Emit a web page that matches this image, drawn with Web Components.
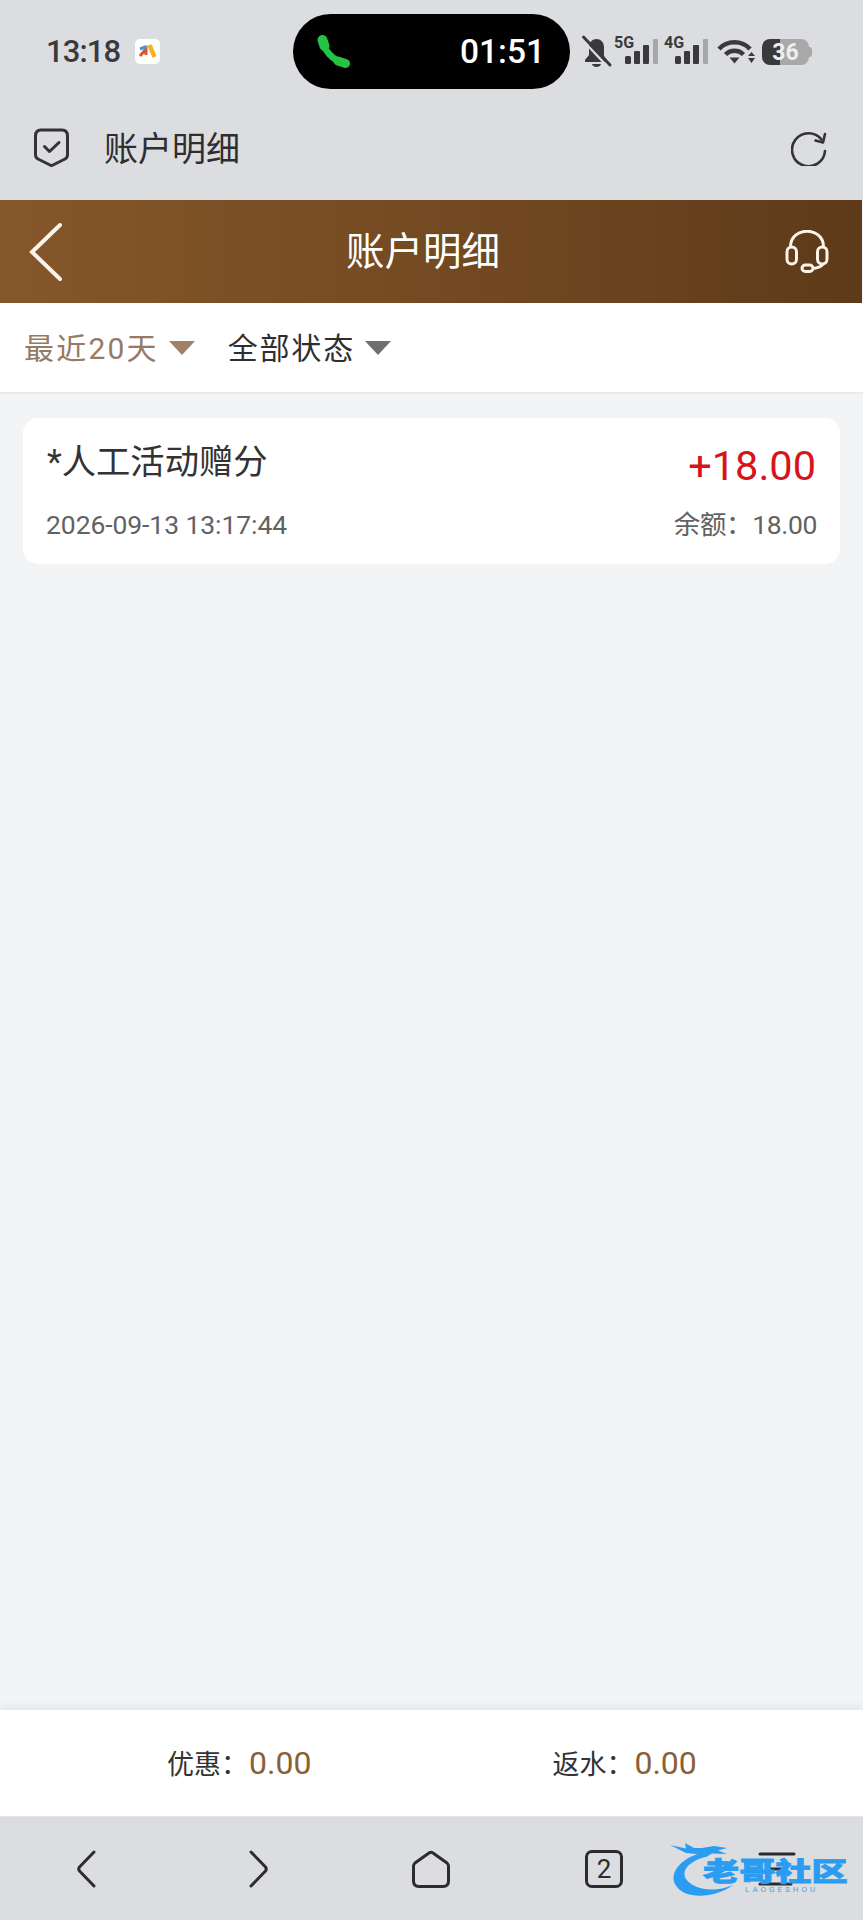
<!DOCTYPE html>
<html lang="zh">
<head>
<meta charset="utf-8">
<title>账户明细</title>
<style>
  html, body { margin: 0; padding: 0; background: #f3f4f6; }
  body { font-family: Roboto, "Noto Sans CJK SC", sans-serif; }
  #app { display: flex; flex-direction: column; height: 1920px; }
  #app > .grow { flex: 1; }
</style>
</head>
<body>
<div id="app">
  <status-bar time="13:18" call="01:51"></status-bar>
  <browser-bar>账户明细</browser-bar>
  <page-header>账户明细</page-header>
  <filter-bar>
    <filter-option active>最近20天</filter-option>
    <filter-option>全部状态</filter-option>
  </filter-bar>
  <div class="grow">
    <ledger-card name="*人工活动赠分" date="2026-09-13 13:17:44" amount="+18.00" balance="18.00"></ledger-card>
  </div>
  <summary-bar discount="0.00" rebate="0.00"></summary-bar>
  <nav-bar tabs="2"></nav-bar>
</div>

<script>
const FONT = 'Roboto, "Noto Sans CJK SC", sans-serif';

class SignalIcon extends HTMLElement {
  constructor() {
    super();
    this.attachShadow({ mode: "open" }).innerHTML = `
      <style>
        :host { display: block; position: relative; flex: none; width: 46px; height: 30px; }
        span { position: absolute; left: 0; top: -3px; font: 700 16px/18px ${FONT}; color: #3a3a3c; }
        svg { position: absolute; left: 0; top: 0; }
      </style>
      <span>${this.getAttribute("label")}</span>
      <svg width="46" height="30" viewBox="0 0 46 30" fill="#3a3a3c">
        <rect x="11" y="19" width="6" height="8" rx="1.5"/>
        <rect x="20" y="14" width="6" height="13" rx="1"/>
        <rect x="29" y="8" width="6" height="19" rx="1"/>
        <rect x="39" y="2" width="5" height="25" rx="1" fill="#a6a7a8"/>
      </svg>`;
  }
}
customElements.define("signal-icon", SignalIcon);

class StatusBar extends HTMLElement {
  constructor() {
    super();
    this.attachShadow({ mode: "open" }).innerHTML = `
      <style>
        :host { display: flex; align-items: center; height: 75px; padding: 14px 0 26px 46px; background: #dcdde0; font-family: ${FONT}; }
        .time { font-size: 31px; font-weight: 500; letter-spacing: -.9px; color: #3a3a3c; width: 89px; }
        .app { width: 25px; height: 25px; border-radius: 5px; background: #fff; margin-right: 133px; flex: none; }
        .pill { width: 277px; height: 75px; border-radius: 38px; background: #000; display: flex; align-items: center; box-sizing: border-box; padding: 0 25px 0 24px; flex: none; }
        .pill span { margin-left: auto; color: #fff; font-size: 33.5px; font-weight: 500; }
        .icons { display: flex; align-items: center; margin-left: 12px; }
        .bell { margin-right: 3px; flex: none; }
        signal-icon + signal-icon { margin-left: 4px; }
        .wifi { margin: 0 8px 0 7px; flex: none; }
        .battery { position: relative; width: 50px; height: 26px; flex: none; margin-left: -1px; }
        .cell { width: 47px; height: 26px; border-radius: 8px; background: linear-gradient(90deg, #3a3a3c 0 18px, #a8a8a8 18px); text-align: center; color: #eee; font: 700 23px/27px ${FONT}; }
        .nub { position: absolute; right: 0; top: 8px; width: 3px; height: 10px; border-radius: 0 3px 3px 0; background: #a8a8a8; }
      </style>
      <span class="time">${this.getAttribute("time")}</span>
      <svg class="app" viewBox="0 0 25 25">
        <path d="M14.5 6 L19.5 18" stroke="#f5b21c" stroke-width="4.5" fill="none"/>
        <path d="M5 17 L11 10 L11 16" stroke="#d9582a" stroke-width="3" fill="none"/>
        <path d="M5 10 L11.5 7.5" stroke="#3f9bd6" stroke-width="3" fill="none"/>
      </svg>
      <div class="pill">
        <svg width="34" height="34" viewBox="0 0 34 34" fill="none" stroke="#25c244" stroke-linecap="round">
          <path d="M6 6 C7 15 15 25 27 28" stroke-width="6.500"/>
          <path d="M5.500 5 L7.500 11" stroke-width="10"/>
          <path d="M21 26 L28.500 28.500" stroke-width="9"/>
        </svg>
        <span>${this.getAttribute("call")}</span>
      </div>
      <div class="icons">
        <svg class="bell" width="29" height="32" viewBox="0 0 29 32" style="overflow:visible">
          <path d="M3 26 H25 V24 L22 20 V11 C22 6 18.500 3 14.500 3 C10.500 3 7 6 7 11 V19 L3 24 Z" fill="#3a3a3c"/>
          <path d="M10 28 H19 C18.500 32 10.500 32 10 28 Z" fill="#3a3a3c"/>
          <path d="M0 3.500 L25 30" stroke="#dcdde0" stroke-width="2.500"/>
          <path d="M1.500 1 L28 29" stroke="#3a3a3c" stroke-width="3" stroke-linecap="round"/>
        </svg>
        <signal-icon label="5G"></signal-icon>
        <signal-icon label="4G"></signal-icon>
        <svg class="wifi" width="38" height="26" viewBox="0 0 38 26" fill="none" stroke="#3a3a3c" stroke-width="4.500">
          <path d="M2 10 C10 1 25 1 33 10"/>
          <path d="M8.500 15.500 C13.500 10.500 21.500 10.500 26.500 15.500"/>
          <path d="M12.500 18.500 H22.500 L17.500 24.500 Z" fill="#3a3a3c" stroke="none"/>
          <path d="M31 17 H38 L34.500 13 Z M31 19 H38 L34.500 24 Z" fill="#3a3a3c" stroke="none"/>
        </svg>
        <div class="battery"><div class="cell">36</div><div class="nub"></div></div>
      </div>`;
  }
}
customElements.define("status-bar", StatusBar);

class BrowserBar extends HTMLElement {
  constructor() {
    super();
    this.attachShadow({ mode: "open" }).innerHTML = `
      <style>
        :host { display: flex; align-items: center; height: 66px; padding: 0 36px 19px 34px; background: #dcdde0; color: #2e2e30; font: 34px ${FONT}; }
        .title { margin-left: 35px; padding-bottom: 4px; flex: 1; }
      </style>
      <svg width="35" height="40" viewBox="0 0 35 40" fill="none" stroke="#333" stroke-width="3" stroke-linejoin="round" stroke-linecap="round">
        <path d="M1.500 8 Q1.500 2 7 2 H28 Q33.500 2 33.500 8 V27 Q33.500 29.500 31 31 L19 37 Q17.500 37.800 16 37 L4 31 Q1.500 29.500 1.500 27 Z"/>
        <path d="M10.500 18.500 L15.500 23.500 L25 14.500"/>
      </svg>
      <span class="title"><slot></slot></span>
      <svg width="36" height="36" viewBox="0 0 36 36" fill="none" stroke="#333" stroke-width="2.6" stroke-linecap="round" stroke-linejoin="round">
        <path d="M34 21 A16.500 16.500 0 1 1 30.500 9.500"/>
        <path d="M34 4 L32 12.500 L24.500 10.500"/>
      </svg>`;
  }
}
customElements.define("browser-bar", BrowserBar);

class PageHeader extends HTMLElement {
  constructor() {
    super();
    this.attachShadow({ mode: "open" }).innerHTML = `
      <style>
        :host { display: flex; align-items: center; height: 103px; padding-left: 29px; margin-right: 1px; background: linear-gradient(90deg, #85572a 0%, #744a22 50%, #5e3a1a 100%); color: #fff; font: 38.500px ${FONT}; }
        .title { margin-left: 284px; padding-bottom: 7px; flex: 1; }
        .help { margin-right: 33px; }
      </style>
      <svg width="33" height="60" viewBox="0 0 33 60" fill="none" stroke="#fbf4ea" stroke-width="4" stroke-linecap="round">
        <path d="M31 3 L3 30 L31 57"/>
      </svg>
      <span class="title"><slot></slot></span>
      <svg class="help" width="44" height="44" viewBox="0 0 44 44" fill="none" stroke="#fbf4ea" stroke-width="3">
        <path d="M5.500 17 C5.500 -4 38.500 -4 38.500 17"/>
        <rect x="2" y="17" width="9.500" height="17" rx="4.700"/>
        <rect x="32.500" y="17" width="9.500" height="17" rx="4.700"/>
        <path d="M38 34 C36 37 33 38 28 38.500"/>
        <rect x="17" y="35" width="11" height="6.500" rx="3.200"/>
      </svg>`;
  }
}
customElements.define("page-header", PageHeader);

class FilterOption extends HTMLElement {
  constructor() {
    super();
    this.attachShadow({ mode: "open" }).innerHTML = `
      <style>
        :host { display: flex; align-items: center; gap: 10px; color: #2e2e30; --arrow: #6f6f6f; font: 30px ${FONT}; letter-spacing: 1.800px; }
        :host([active]) { color: #957a66; --arrow: #a08168; letter-spacing: 2.200px; }
        i { width: 0; height: 0; border: 13.500px solid transparent; border-bottom: 0; border-top: 14px solid var(--arrow); margin-top: 4px; }
      </style>
      <slot></slot><i></i>`;
  }
}
customElements.define("filter-option", FilterOption);

class FilterBar extends HTMLElement {
  constructor() {
    super();
    this.attachShadow({ mode: "open" }).innerHTML = `
      <style>
        :host { display: flex; align-items: center; gap: 33px; box-sizing: border-box; height: 91px; padding: 0 0 4px 24px; background: #fff; border-bottom: 2px solid #e9eaec; }
      </style>
      <slot></slot>`;
  }
}
customElements.define("filter-bar", FilterBar);

class LedgerCard extends HTMLElement {
  constructor() {
    super();
    this.attachShadow({ mode: "open" }).innerHTML = `
      <style>
        :host { display: grid; grid-template-columns: 1fr auto; align-content: space-between; height: 146px; box-sizing: border-box; margin: 24px 23px 0; padding: 20px 23px 21px 24px; border-radius: 15px; background: #fff; font-family: ${FONT}; }
        .name { font-size: 34.300px; line-height: 48px; color: #333; }
        .amount { font-size: 41.500px; line-height: 52px; margin: 2px 1px 0 0; color: #d7141a; text-align: right; }
        .date, .balance { font-size: 26.500px; line-height: 36px; color: #626262; }
        .date { margin-left: -1px; letter-spacing: -.08px; }
        .balance { text-align: right; letter-spacing: -.35px; }
      </style>
      <span class="name">${this.getAttribute("name")}</span>
      <span class="amount">${this.getAttribute("amount")}</span>
      <span class="date">${this.getAttribute("date")}</span>
      <span class="balance">余额：${this.getAttribute("balance")}</span>`;
  }
}
customElements.define("ledger-card", LedgerCard);

class SummaryBar extends HTMLElement {
  constructor() {
    super();
    this.attachShadow({ mode: "open" }).innerHTML = `
      <style>
        :host { display: flex; align-items: center; gap: 241px; height: 107px; box-sizing: border-box; padding: 0 0 1px 167px; background: #fff; box-shadow: 0 -3px 8px rgba(0,0,0,.07); border-bottom: 1px solid #e4e5e7; color: #333; font: 27px ${FONT}; position: relative; }
        b { font-weight: 400; font-size: 32px; color: #8a5f36; margin-left: 1px; }
        div { display: flex; align-items: center; white-space: nowrap; }
      </style>
      <div>优惠：<b>${this.getAttribute("discount")}</b></div>
      <div>返水：<b>${this.getAttribute("rebate")}</b></div>`;
  }
}
customElements.define("summary-bar", SummaryBar);

class WatermarkLogo extends HTMLElement {
  constructor() {
    super();
    this.attachShadow({ mode: "open" }).innerHTML = `
      <style>
        :host { display: block; position: absolute; left: 670px; top: 1840px; width: 185px; height: 60px; font-family: ${FONT}; pointer-events: none; }
        svg { position: absolute; left: 0; top: 0; }
        .cn { position: absolute; left: 33px; top: 17px; font-size: 26px; line-height: 30px; font-weight: 900; color: #2a9df2; white-space: nowrap; transform: scaleX(1.39); transform-origin: 0 0; -webkit-text-stroke: .8px #2a9df2; }
        .en { position: absolute; left: 75px; top: 45px; font-size: 8px; line-height: 9px; letter-spacing: 3px; color: #4f9fdc; white-space: nowrap; }
      </style>
      <svg width="70" height="60" viewBox="0 0 70 60" fill="#2a9df2">
        <path d="M34 13 C12 16 -1 33 5 44 C13 60 44 59 63 45 C44 53 24 50 16 39 C10 29 22 20 38 16 Z"/>
        <path d="M0 5 L16 8.500 L15 3 L24 8 L32 8 L44 6 L57 8 L48 10.500 L57 14 L42 13.500 L36 17 L26 14 L16 13 Z"/>
      </svg>
      <span class="cn">老哥社区</span>
      <span class="en">LAOGESHOU</span>`;
  }
}
customElements.define("watermark-logo", WatermarkLogo);

class NavBar extends HTMLElement {
  constructor() {
    super();
    this.attachShadow({ mode: "open" }).innerHTML = `
      <style>
        :host { display: flex; height: 103px; background: #dcdde0; color: #2c2c2e; }
        div { flex: 1; display: flex; align-items: center; justify-content: center; }
        svg { display: block; fill: none; stroke: #2c2c2e; stroke-width: 3; stroke-linecap: round; stroke-linejoin: round; }
        .tabs { box-sizing: border-box; width: 38px; height: 38px; flex: none; border: 3px solid #2c2c2e; border-radius: 7px; font: 26px/32px ${FONT}; text-align: center; display: block; }
      </style>
      <div><svg width="20" height="38" viewBox="0 0 20 38"><path d="M18 2 L3.500 17 Q2 19 3.500 21 L18 36"/></svg></div>
      <div><svg width="20" height="38" viewBox="0 0 20 38"><path d="M2 2 L16.500 17 Q18 19 16.500 21 L2 36"/></svg></div>
      <div><svg width="38" height="38" viewBox="0 0 38 38"><path d="M17 3 Q19 1.500 21 3 L35 13 Q36.500 14.500 36.500 16 V31 Q36.500 36.500 31 36.500 H7 Q1.500 36.500 1.500 31 V16 Q1.500 14.500 3 13 Z"/></svg></div>
      <div><span class="tabs">${this.getAttribute("tabs")}</span></div>
      <div><svg width="38" height="34" viewBox="0 0 38 34"><path d="M2 2 H36 M10 17 H28 M2 32 H33"/></svg></div>
      <watermark-logo></watermark-logo>`;
  }
}
customElements.define("nav-bar", NavBar);
</script>
</body>
</html>
